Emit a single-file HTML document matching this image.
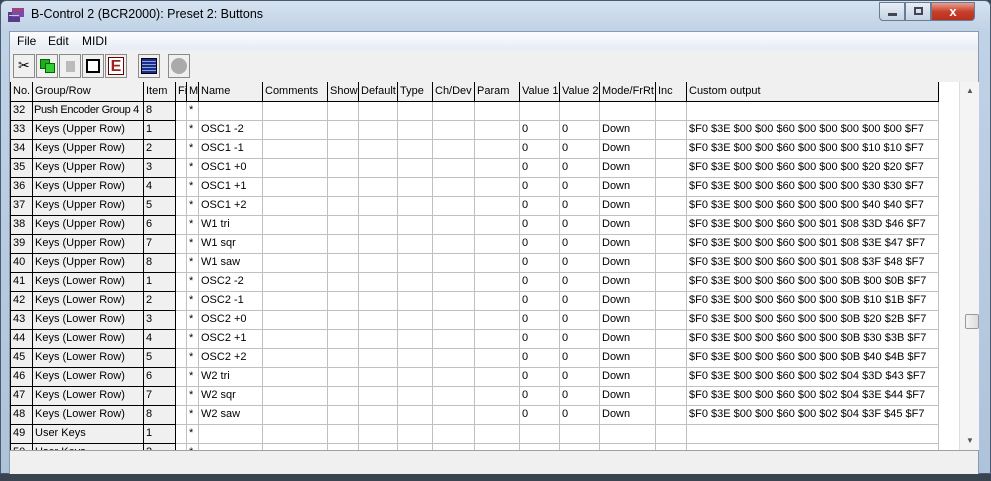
<!DOCTYPE html>
<html><head><meta charset="utf-8"><style>
*{margin:0;padding:0;box-sizing:border-box}
body{width:991px;height:481px;overflow:hidden;background:#3a4450;font-family:"Liberation Sans",sans-serif;font-size:11px;color:#000;position:relative}
.win{position:absolute;left:0;top:0;width:991px;height:474px;background:linear-gradient(#d5e2f0,#c0d2e6 30px,#aec3da);border-radius:6px 6px 0 0;border:1px solid #4a5a70}
.title{position:absolute;left:30px;top:6px;font-size:12.5px;color:#000}
.ico{position:absolute;left:7px;top:5px;width:18px;height:17px}
.btns{position:absolute;left:878px;top:1px;height:19px;display:flex}
.btns div{height:19px;border:1px solid #6a7c95;background:linear-gradient(#e8eef6,#c5d3e4)}
.client{position:absolute;left:8px;top:30px;width:970px;height:443px;background:#f0f0f0;border:1px solid #8a9ab0}
.menu{position:absolute;left:0;top:0;width:968px;height:18px;background:linear-gradient(#fbfcfe,#e6ecf5);font-size:12px}
.menu span{position:absolute;top:2px}
.b{position:absolute;top:22px;width:22px;height:24px;border:1px solid #8a8a8a;background:#f0f0f0}
.grid{position:absolute;left:0;top:50px;width:949px;height:368px;background:#fff;overflow:hidden}
table{border-collapse:collapse;table-layout:fixed;position:absolute;left:0;top:0;width:928px}
td{height:19px;border:1px solid #c0c0c0;padding:0 0 0 2px;white-space:nowrap;overflow:hidden;vertical-align:middle;line-height:17px}
tr.h td{background:#f0f0f0;border:1px solid #000;border-top:none}
td.f{background:#f0f0f0;border:1px solid #000}
.sb{position:absolute;left:949px;top:50px;width:20px;height:368px;background:#f4f4f4;border-left:1px solid #ddd}
.status{position:absolute;left:0;top:418px;width:968px;height:24px;background:#f0f0f0;border-top:1px solid #a0a0a0}
</style></head><body>
<div class="win">
<svg class="ico" viewBox="0 0 18 17"><rect x="0" y="6" width="12" height="10" fill="#5a3a8a"/><rect x="4" y="2" width="12" height="9" fill="#7a4ab0"/><rect x="5" y="3" width="10" height="2" fill="#c04040"/><rect x="1" y="9" width="10" height="1" fill="#ccc"/></svg>
<div class="title">B-Control 2 (BCR2000): Preset 2: Buttons</div>
<div class="btns"><div style="width:26px;border-radius:0 0 0 4px"><div style="margin:10px 8px 0;width:9px;height:3px;background:#445;border:none"></div></div><div style="width:26px"><div style="margin:4px 8px 0;width:9px;height:8px;border:2px solid #445;background:none"></div></div><div style="width:44px;background:linear-gradient(#e8a090,#c8402a 50%,#b83020);border-radius:0 0 4px 0;color:#fff;font-weight:bold;text-align:center;line-height:17px;font-size:13px">x</div></div>
<div class="client">
<div class="menu"><span style="left:7px">File</span><span style="left:38px">Edit</span><span style="left:72px">MIDI</span></div>
<div class="b" style="left:3px"><span style="position:absolute;left:4px;top:2px;font-size:14px">✂</span></div>
<div class="b" style="left:26px"><div style="position:absolute;left:3px;top:4px;width:10px;height:10px;background:#2a2;border:1px solid #060"></div><div style="position:absolute;left:8px;top:8px;width:10px;height:10px;background:#3c3;border:1px solid #060"></div></div>
<div class="b" style="left:49px"><div style="position:absolute;left:6px;top:6px;width:9px;height:11px;background:#bbb"></div></div>
<div class="b" style="left:72px"><div style="position:absolute;left:3px;top:4px;width:14px;height:14px;border:2px solid #000;background:#fff"></div></div>
<div class="b" style="left:95px"><div style="position:absolute;left:2px;top:2px;width:16px;height:18px;background:#fff;color:#a02020;font-weight:bold;font-size:16px;line-height:17px;text-align:center;border:1px solid #600">E</div></div>
<div class="b" style="left:128px"><div style="position:absolute;left:2px;top:3px;width:16px;height:16px;border:1px solid #000;background-image:repeating-linear-gradient(#1a2a9a 0 2px,#8ab 2px 3px)"></div></div>
<div class="b" style="left:158px"><div style="position:absolute;left:2px;top:3px;width:16px;height:16px;border-radius:50%;background:#aaa"></div></div>
<div class="grid"><table>
<colgroup><col style="width:22px"><col style="width:111px"><col style="width:32px"><col style="width:11px"><col style="width:12px"><col style="width:64px"><col style="width:65px"><col style="width:31px"><col style="width:39px"><col style="width:35px"><col style="width:42px"><col style="width:45px"><col style="width:40px"><col style="width:40px"><col style="width:56px"><col style="width:31px"><col style="width:252px"></colgroup>
<tr class="h"><td>No.</td><td>Group/Row</td><td>Item</td><td>Fi</td><td>M</td><td>Name</td><td>Comments</td><td>Show</td><td>Default</td><td>Type</td><td>Ch/Dev</td><td>Param</td><td>Value 1</td><td>Value 2</td><td>Mode/FrRt</td><td>Inc</td><td>Custom output</td></tr>
<tr><td class="f">32</td><td class="f" style="letter-spacing:-0.35px;padding-left:1px">Push Encoder Group 4</td><td class="f">8</td><td></td><td>*</td><td></td><td></td><td></td><td></td><td></td><td></td><td></td><td></td><td></td><td></td><td></td><td></td></tr>
<tr><td class="f">33</td><td class="f">Keys (Upper Row)</td><td class="f">1</td><td></td><td>*</td><td>OSC1 -2</td><td></td><td></td><td></td><td></td><td></td><td></td><td>0</td><td>0</td><td>Down</td><td></td><td>$F0 $3E $00 $00 $60 $00 $00 $00 $00 $00 $F7</td></tr>
<tr><td class="f">34</td><td class="f">Keys (Upper Row)</td><td class="f">2</td><td></td><td>*</td><td>OSC1 -1</td><td></td><td></td><td></td><td></td><td></td><td></td><td>0</td><td>0</td><td>Down</td><td></td><td>$F0 $3E $00 $00 $60 $00 $00 $00 $10 $10 $F7</td></tr>
<tr><td class="f">35</td><td class="f">Keys (Upper Row)</td><td class="f">3</td><td></td><td>*</td><td>OSC1 +0</td><td></td><td></td><td></td><td></td><td></td><td></td><td>0</td><td>0</td><td>Down</td><td></td><td>$F0 $3E $00 $00 $60 $00 $00 $00 $20 $20 $F7</td></tr>
<tr><td class="f">36</td><td class="f">Keys (Upper Row)</td><td class="f">4</td><td></td><td>*</td><td>OSC1 +1</td><td></td><td></td><td></td><td></td><td></td><td></td><td>0</td><td>0</td><td>Down</td><td></td><td>$F0 $3E $00 $00 $60 $00 $00 $00 $30 $30 $F7</td></tr>
<tr><td class="f">37</td><td class="f">Keys (Upper Row)</td><td class="f">5</td><td></td><td>*</td><td>OSC1 +2</td><td></td><td></td><td></td><td></td><td></td><td></td><td>0</td><td>0</td><td>Down</td><td></td><td>$F0 $3E $00 $00 $60 $00 $00 $00 $40 $40 $F7</td></tr>
<tr><td class="f">38</td><td class="f">Keys (Upper Row)</td><td class="f">6</td><td></td><td>*</td><td>W1 tri</td><td></td><td></td><td></td><td></td><td></td><td></td><td>0</td><td>0</td><td>Down</td><td></td><td>$F0 $3E $00 $00 $60 $00 $01 $08 $3D $46 $F7</td></tr>
<tr><td class="f">39</td><td class="f">Keys (Upper Row)</td><td class="f">7</td><td></td><td>*</td><td>W1 sqr</td><td></td><td></td><td></td><td></td><td></td><td></td><td>0</td><td>0</td><td>Down</td><td></td><td>$F0 $3E $00 $00 $60 $00 $01 $08 $3E $47 $F7</td></tr>
<tr><td class="f">40</td><td class="f">Keys (Upper Row)</td><td class="f">8</td><td></td><td>*</td><td>W1 saw</td><td></td><td></td><td></td><td></td><td></td><td></td><td>0</td><td>0</td><td>Down</td><td></td><td>$F0 $3E $00 $00 $60 $00 $01 $08 $3F $48 $F7</td></tr>
<tr><td class="f">41</td><td class="f">Keys (Lower Row)</td><td class="f">1</td><td></td><td>*</td><td>OSC2 -2</td><td></td><td></td><td></td><td></td><td></td><td></td><td>0</td><td>0</td><td>Down</td><td></td><td>$F0 $3E $00 $00 $60 $00 $00 $0B $00 $0B $F7</td></tr>
<tr><td class="f">42</td><td class="f">Keys (Lower Row)</td><td class="f">2</td><td></td><td>*</td><td>OSC2 -1</td><td></td><td></td><td></td><td></td><td></td><td></td><td>0</td><td>0</td><td>Down</td><td></td><td>$F0 $3E $00 $00 $60 $00 $00 $0B $10 $1B $F7</td></tr>
<tr><td class="f">43</td><td class="f">Keys (Lower Row)</td><td class="f">3</td><td></td><td>*</td><td>OSC2 +0</td><td></td><td></td><td></td><td></td><td></td><td></td><td>0</td><td>0</td><td>Down</td><td></td><td>$F0 $3E $00 $00 $60 $00 $00 $0B $20 $2B $F7</td></tr>
<tr><td class="f">44</td><td class="f">Keys (Lower Row)</td><td class="f">4</td><td></td><td>*</td><td>OSC2 +1</td><td></td><td></td><td></td><td></td><td></td><td></td><td>0</td><td>0</td><td>Down</td><td></td><td>$F0 $3E $00 $00 $60 $00 $00 $0B $30 $3B $F7</td></tr>
<tr><td class="f">45</td><td class="f">Keys (Lower Row)</td><td class="f">5</td><td></td><td>*</td><td>OSC2 +2</td><td></td><td></td><td></td><td></td><td></td><td></td><td>0</td><td>0</td><td>Down</td><td></td><td>$F0 $3E $00 $00 $60 $00 $00 $0B $40 $4B $F7</td></tr>
<tr><td class="f">46</td><td class="f">Keys (Lower Row)</td><td class="f">6</td><td></td><td>*</td><td>W2 tri</td><td></td><td></td><td></td><td></td><td></td><td></td><td>0</td><td>0</td><td>Down</td><td></td><td>$F0 $3E $00 $00 $60 $00 $02 $04 $3D $43 $F7</td></tr>
<tr><td class="f">47</td><td class="f">Keys (Lower Row)</td><td class="f">7</td><td></td><td>*</td><td>W2 sqr</td><td></td><td></td><td></td><td></td><td></td><td></td><td>0</td><td>0</td><td>Down</td><td></td><td>$F0 $3E $00 $00 $60 $00 $02 $04 $3E $44 $F7</td></tr>
<tr><td class="f">48</td><td class="f">Keys (Lower Row)</td><td class="f">8</td><td></td><td>*</td><td>W2 saw</td><td></td><td></td><td></td><td></td><td></td><td></td><td>0</td><td>0</td><td>Down</td><td></td><td>$F0 $3E $00 $00 $60 $00 $02 $04 $3F $45 $F7</td></tr>
<tr><td class="f">49</td><td class="f">User Keys</td><td class="f">1</td><td></td><td>*</td><td></td><td></td><td></td><td></td><td></td><td></td><td></td><td></td><td></td><td></td><td></td><td></td></tr>
<tr><td class="f">50</td><td class="f">User Keys</td><td class="f">2</td><td></td><td>*</td><td></td><td></td><td></td><td></td><td></td><td></td><td></td><td></td><td></td><td></td><td></td><td></td></tr>
</table></div>
<div class="sb"><div style="position:absolute;left:6px;top:4px;font-size:8px;color:#555">▲</div><div style="position:absolute;left:5px;top:232px;width:14px;height:15px;border:1px solid #999;border-radius:2px;background:linear-gradient(90deg,#f4f4f4,#dcdcdc)"></div><div style="position:absolute;left:6px;top:354px;font-size:8px;color:#555">▼</div></div>
<div class="status"></div>
</div>
</div>
</body></html>
